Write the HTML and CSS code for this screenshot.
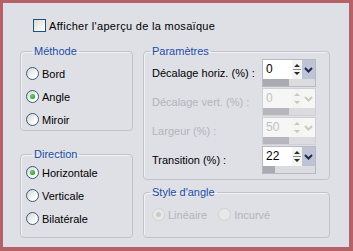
FILE: index.html
```html
<!DOCTYPE html>
<html lang="fr">
<head>
    <meta charset="UTF-8">
    <title>Mosaïque</title>
    <link rel="stylesheet" href="styles.css">
</head>
<body>

    <div class="dlg">

        <label class="chk-row"><span class="chk"></span>Afficher l'aperçu de la mosaïque</label>

        <div class="cols">
            <div class="col col-left">
                <fieldset class="grp grp-methode">
                    <legend>Méthode</legend>
                    <div class="opt"><span class="radio"></span>Bord</div>
                    <div class="opt"><span class="radio on"></span>Angle</div>
                    <div class="opt"><span class="radio"></span>Miroir</div>
                </fieldset>

                <fieldset class="grp grp-direction">
                    <legend>Direction</legend>
                    <div class="opt"><span class="radio on"></span>Horizontale</div>
                    <div class="opt"><span class="radio"></span>Verticale</div>
                    <div class="opt"><span class="radio"></span>Bilatérale</div>
                </fieldset>
            </div>

            <div class="col col-right">
                <fieldset class="grp grp-params">
                    <legend>Paramètres</legend>

                    <div class="param">
                        <span class="plabel">Décalage horiz. (%) :</span>
                        <div class="spin">
                            <div class="spin-top">
                                <span class="spin-val">0</span>
                                <span class="spin-ud">
                                    <svg width="10" height="19" viewBox="0 0 10 19"><path d="M2 7 L5 4 L8 7 Z M2 12 L5 15 L8 12 Z" fill="#2a2a2a"/><path d="M1 9.5 H9" stroke="#8a8a90" stroke-width="1"/></svg>
                                </span>
                                <span class="spin-dd">
                                    <svg width="13" height="19" viewBox="0 0 13 19"><path d="M3 8 L6.5 11.5 L10 8" fill="none" stroke="#1e2a4a" stroke-width="2"/></svg>
                                </span>
                            </div>
                            <div class="spin-bar"><span class="spin-fill" style="width: 26px"></span></div>
                        </div>
                    </div>

                    <div class="param off">
                        <span class="plabel">Décalage vert. (%) :</span>
                        <div class="spin">
                            <div class="spin-top">
                                <span class="spin-val">0</span>
                                <span class="spin-ud">
                                    <svg width="10" height="19" viewBox="0 0 10 19"><path d="M2 7 L5 4 L8 7 Z M2 12 L5 15 L8 12 Z" fill="#c8c8c0"/></svg>
                                </span>
                                <span class="spin-dd">
                                    <svg width="13" height="19" viewBox="0 0 13 19"><path d="M3 8 L6.5 11.5 L10 8" fill="none" stroke="#c8ccbc" stroke-width="2"/></svg>
                                </span>
                            </div>
                            <div class="spin-bar"><span class="spin-fill" style="width: 26px"></span></div>
                        </div>
                    </div>

                    <div class="param off">
                        <span class="plabel">Largeur (%) :</span>
                        <div class="spin">
                            <div class="spin-top">
                                <span class="spin-val">50</span>
                                <span class="spin-ud">
                                    <svg width="10" height="19" viewBox="0 0 10 19"><path d="M2 7 L5 4 L8 7 Z M2 12 L5 15 L8 12 Z" fill="#c8c8c0"/></svg>
                                </span>
                                <span class="spin-dd">
                                    <svg width="13" height="19" viewBox="0 0 13 19"><path d="M3 8 L6.5 11.5 L10 8" fill="none" stroke="#c8ccbc" stroke-width="2"/></svg>
                                </span>
                            </div>
                            <div class="spin-bar"><span class="spin-fill" style="width: 26px"></span></div>
                        </div>
                    </div>

                    <div class="param">
                        <span class="plabel">Transition (%) :</span>
                        <div class="spin">
                            <div class="spin-top">
                                <span class="spin-val">22</span>
                                <span class="spin-ud">
                                    <svg width="10" height="19" viewBox="0 0 10 19"><path d="M2 7 L5 4 L8 7 Z M2 12 L5 15 L8 12 Z" fill="#2a2a2a"/><path d="M1 9.5 H9" stroke="#8a8a90" stroke-width="1"/></svg>
                                </span>
                                <span class="spin-dd">
                                    <svg width="13" height="19" viewBox="0 0 13 19"><path d="M3 8 L6.5 11.5 L10 8" fill="none" stroke="#1e2a4a" stroke-width="2"/></svg>
                                </span>
                            </div>
                            <div class="spin-bar"><span class="spin-fill" style="width: 12px"></span></div>
                        </div>
                    </div>
                </fieldset>

                <fieldset class="grp grp-style">
                    <legend>Style d'angle</legend>
                    <div class="style-row">
                        <div class="opt off"><span class="radio on"></span>Linéaire</div>
                        <div class="opt off"><span class="radio"></span>Incurvé</div>
                    </div>
                </fieldset>
            </div>
        </div>

    </div>

</body>
</html>
```

FILE: styles.css
```css
body {
    margin: 0;
    font-family: "Liberation Sans", Arial, sans-serif;
    font-size: 11px;
    color: #000;
}

.dlg {
    width: 353px;
    height: 251px;
    box-sizing: border-box;
    border-style: solid;
    border-color: #b6606a;
    border-width: 3px 4px 4px 3px;
    background: #dfdfe6;
    padding: 16px 0 0 17px;
}

/* top checkbox */
.chk-row {
    display: flex;
    align-items: center;
    height: 13px;
    margin-left: 13px;
    gap: 3px;
    letter-spacing: 0.3px;
}

.chk {
    width: 11px;
    height: 11px;
    border: 1px solid #1c5180;
    background: linear-gradient(135deg, #dcdcd6, #fff);
}

.cols {
    display: flex;
    gap: 10px;
    margin-top: 12px;
}

.col {
    display: flex;
    flex-direction: column;
}

.col-left {
    width: 113px;
    gap: 16px;
}

.col-right {
    width: 187px;
    gap: 5px;
}

/* group boxes */
.grp {
    margin: 0;
    padding: 0;
    min-inline-size: 0;
    box-sizing: border-box;
    border: 1px solid #c2c2ca;
    border-radius: 4px;
    box-shadow: inset 1px 1px 0 #f2f2f6;
}

.grp legend {
    margin-left: 6px;
    padding: 0 2px;
    line-height: 14px;
    color: #1c4ea6;
}

.grp-methode {
    height: 87px;
    padding: 4px 0 0 5px;
}

.grp-direction {
    height: 91px;
    padding: 0 0 0 5px;
}

.grp-params {
    height: 136px;
}

.grp-style {
    height: 53px;
}

/* radio options */
.opt {
    display: flex;
    align-items: center;
    height: 23px;
    gap: 3px;
}

.radio {
    position: relative;
    width: 11px;
    height: 11px;
    border: 1px solid #3a5a7c;
    border-radius: 50%;
    background: linear-gradient(135deg, #d4d4d0, #fff 75%);
}

.radio.on::after {
    content: "";
    position: absolute;
    left: 3px;
    top: 3px;
    width: 5px;
    height: 5px;
    border-radius: 50%;
    background: radial-gradient(circle at 40% 40%, #7ed07e, #21a121 70%);
}

.opt.off {
    color: #b4b4ba;
}

.opt.off .radio {
    border-color: #d2d2cc;
    background: #e8e8ea;
}

.opt.off .radio.on::after {
    background: #cbcbc6;
}

.style-row {
    display: flex;
    gap: 11px;
    padding: 4px 0 0 8px;
}

/* parameter rows */
.param {
    display: flex;
    align-items: center;
    height: 29px;
    padding-left: 8px;
}

.plabel {
    width: 110px;
}

.param.off .plabel {
    color: #b4b4ba;
}

.spin {
    width: 52px;
    border: 1px solid #b8b8c0;
}

.spin-top {
    display: flex;
    height: 19px;
    background: #fff;
}

.spin-val {
    flex: 1;
    padding-left: 3px;
    font-size: 12px;
    line-height: 19px;
}

.spin-ud {
    width: 10px;
    height: 19px;
    background: #f4f4f0;
}

.spin-dd {
    width: 13px;
    height: 19px;
    background: #bfc3d6;
}

.spin-ud svg, .spin-dd svg {
    display: block;
}

.spin-bar {
    height: 7px;
    background: #dcdce0;
}

.spin-fill {
    display: block;
    height: 100%;
    background: #aaaab2;
}

.param.off .spin {
    border-color: #cfcfd4;
}

.param.off .spin-top {
    background: #f6f6f6;
}

.param.off .spin-val {
    color: #c0c0c4;
}

.param.off .spin-dd {
    background: #f6f6f4;
}

.param.off .spin-fill {
    background: #b6b6bc;
}
```
